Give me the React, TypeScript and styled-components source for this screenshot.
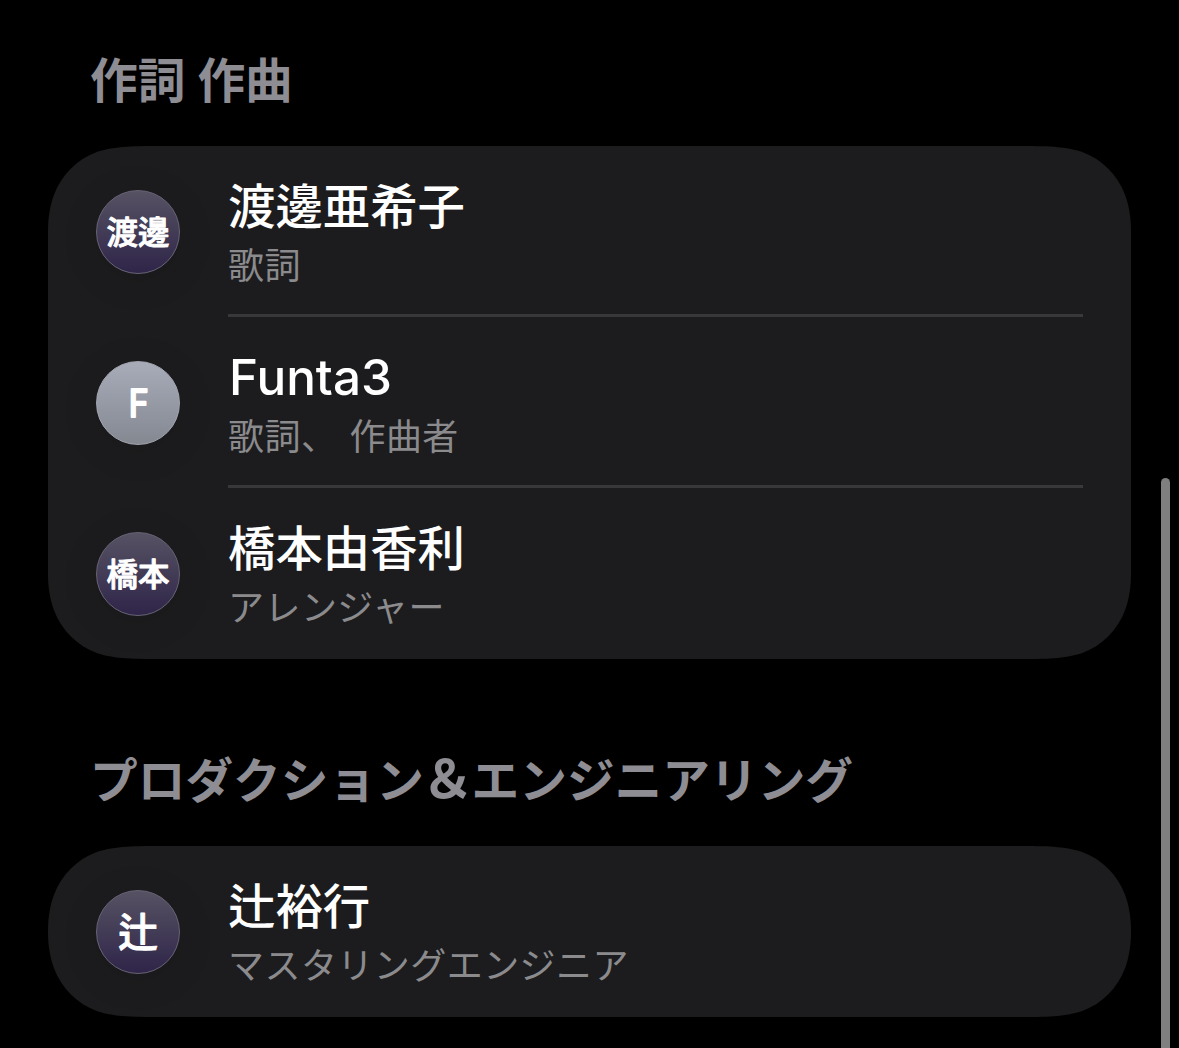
import React from "react";
import styled, { createGlobalStyle } from "styled-components";

const Global = createGlobalStyle`
  html, body { margin: 0; background: #000; }
  body { overflow: hidden; }
  * { box-sizing: border-box; }
`;

const CARD_WIDTH = 1083;
const ROW_HEIGHT = 171;

// Continuous-curvature corners: a long tail along the top and bottom edges,
// a short one along the sides so that single-row cards still fit.
const cardShape = (rows: number) => {
  const w = CARD_WIDTH;
  const h = rows * ROW_HEIGHT;
  return [
    `M119 0 L${w - 119} 0`,
    `C${w - 85} 0 ${w - 67.7} 0 ${w - 49.3} 5.8`,
    `C${w - 28.9} 13.3 ${w - 13.3} 28.9 ${w - 5.8} 49.3`,
    `C${w - 2.5} 58.4 ${w} 70 ${w} 85`,
    `L${w} ${h - 85}`,
    `C${w} ${h - 70} ${w - 2.5} ${h - 58.4} ${w - 5.8} ${h - 49.3}`,
    `C${w - 13.3} ${h - 28.9} ${w - 28.9} ${h - 13.3} ${w - 49.3} ${h - 5.8}`,
    `C${w - 67.7} ${h} ${w - 85} ${h} ${w - 119} ${h}`,
    `L119 ${h}`,
    `C85 ${h} 67.7 ${h} 49.3 ${h - 5.8}`,
    `C28.9 ${h - 13.3} 13.3 ${h - 28.9} 5.8 ${h - 49.3}`,
    `C2.5 ${h - 58.4} 0 ${h - 70} 0 ${h - 85}`,
    `L0 85`,
    `C0 70 2.5 58.4 5.8 49.3`,
    `C13.3 28.9 28.9 13.3 49.3 5.8`,
    `C67.7 0 85 0 119 0 Z`,
  ].join(" ");
};

const Screen = styled.div`
  position: relative;
  width: 1179px;
  height: 1048px;
  overflow: hidden;
  background: #000;
  padding: 0 48px;
  color: #fff;
  font-family: Inter, "Noto Sans CJK JP", sans-serif;
`;

const Section = styled.section``;

const Heading = styled.h2<{ $top: number }>`
  margin: 0;
  padding: ${(p) => p.$top}px 42px 0;
  height: ${(p) => p.$top + 95}px;
  font-size: 47.7px;
  line-height: 60px;
  font-weight: 600;
  color: #8d8d93;
  white-space: nowrap;
`;

const Ampersand = styled.span`
  margin: 0 -2.5px;
  font-size: 52.7px;
  line-height: 1px;
`;

const Card = styled.ul<{ $rows: number }>`
  list-style: none;
  margin: 0;
  padding: 0 48px;
  background: #1c1c1e;
  clip-path: path("${(p) => cardShape(p.$rows)}");
`;

const Row = styled.li`
  display: flex;
  gap: 48px;
  height: ${ROW_HEIGHT}px;
`;

const Avatar = styled.div<{ $tone: "violet" | "silver" }>`
  flex: none;
  width: 84px;
  height: 84px;
  margin-top: 44px;
  border-radius: 50%;
  border: 1px solid ${(p) => (p.$tone === "violet" ? "#686376" : "#a3a6b0")};
  background: ${(p) =>
    p.$tone === "violet"
      ? "linear-gradient(#565263, #2f2549)"
      : "linear-gradient(#a8acb9, #848891)"};
  box-shadow: 0 6px 36px 4px rgba(0, 0, 0, 0.08);
`;

const Monogram = styled.svg`
  display: block;
  width: 82px;
  height: 82px;
  fill: #fff;
  stroke: #fff;
  stroke-linejoin: round;
  text-anchor: middle;
`;

const Body = styled.div<{ $divided: boolean }>`
  flex: 1;
  padding-top: 31px;
  border-bottom: 3px solid ${(p) => (p.$divided ? "#38383a" : "transparent")};
`;

const Name = styled.div<{ $latin: boolean }>`
  height: 60px;
  padding-left: ${(p) => (p.$latin ? 1 : 0)}px;
  font-size: ${(p) => (p.$latin ? 49.4 : 47.4)}px;
  line-height: ${(p) => (p.$latin ? 58 : 60)}px;
  font-weight: 500;
  white-space: nowrap;
`;

const Role = styled.div`
  font-size: 36px;
  line-height: 58px;
  letter-spacing: 0.45px;
  word-spacing: 1.5px;
  color: #8b8b8d;
  white-space: pre;
`;

const Scrollbar = styled.div`
  position: absolute;
  top: 478px;
  right: 9px;
  width: 9px;
  height: 700px;
  border-radius: 5px;
  background: #7f7f7f;
`;

type Person = {
  name: string;
  role: string;
  initials: string;
  size: number;
  baseline: number;
  tone: "violet" | "silver";
};

const sections: { title: string; top: number; people: Person[] }[] = [
  {
    title: "作詞 作曲",
    top: 51,
    people: [
      { name: "渡邊亜希子", role: "歌詞", initials: "渡邊", size: 31.5, baseline: 52.5, tone: "violet" },
      { name: "Funta3", role: "歌詞、 作曲者", initials: "F", size: 37.5, baseline: 54.5, tone: "silver" },
      { name: "橋本由香利", role: "アレンジャー", initials: "橋本", size: 31.5, baseline: 52.5, tone: "violet" },
    ],
  },
  {
    title: "プロダクション＆エンジニアリング",
    top: 92,
    people: [
      { name: "辻裕行", role: "マスタリングエンジニア", initials: "辻", size: 40, baseline: 55.5, tone: "violet" },
    ],
  },
];

const isLatin = (text: string) => /^[A-Za-z0-9]+$/.test(text);

function Title({ text }: { text: string }) {
  const [before, after] = text.split("＆");
  return (
    <>
      {before}
      {after !== undefined && <Ampersand>＆</Ampersand>}
      {after}
    </>
  );
}

function Initials({ person }: { person: Person }) {
  const latin = isLatin(person.initials);
  return (
    <Monogram viewBox="0 0 82 82">
      <text
        transform={`translate(${latin ? 41.6 : 41} ${person.baseline}) scale(${latin ? 0.9 : 1} 1)`}
        fontSize={person.size}
        fontWeight={latin ? 400 : 500}
        strokeWidth={latin ? 2.2 : 0.9}
      >
        {person.initials}
      </text>
    </Monogram>
  );
}

export default function App() {
  return (
    <Screen>
      <Global />
      {sections.map((s) => (
        <Section key={s.title}>
          <Heading $top={s.top}>
            <Title text={s.title} />
          </Heading>
          <Card $rows={s.people.length}>
            {s.people.map((p, i) => (
              <Row key={p.name}>
                <Avatar $tone={p.tone}>
                  <Initials person={p} />
                </Avatar>
                <Body $divided={i < s.people.length - 1}>
                  <Name $latin={isLatin(p.name)}>{p.name}</Name>
                  <Role>{p.role}</Role>
                </Body>
              </Row>
            ))}
          </Card>
        </Section>
      ))}
      <Scrollbar />
    </Screen>
  );
}
